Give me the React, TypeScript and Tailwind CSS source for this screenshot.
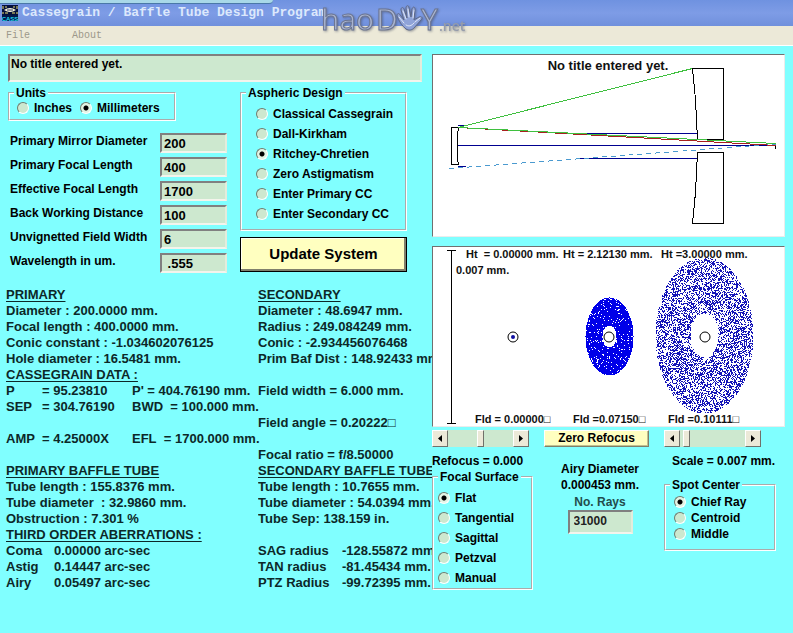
import { useState } from "react";
import type { ReactNode } from "react";

const FIELDS = [
  ["Primary Mirror Diameter", "200"],
  ["Primary Focal Length", "400"],
  ["Effective Focal Length", "1700"],
  ["Back Working Distance", "100"],
  ["Unvignetted Field Width", "6"],
  ["Wavelength in um.", " .555"],
];

const sunken =
  "rounded-none border-2 border-t-[#808080] border-l-[#808080] border-r-[#e4ecdc] border-b-[#f4f4ec] bg-[#cde8cf] outline-none";

function Group({ title, className, children }: { title: string; className?: string; children: ReactNode }) {
  return (
    <fieldset className={`border-2 border-white [border-style:groove] ${className ?? ""}`}>
      <legend className="ml-1 px-[2px] leading-4">{title}</legend>
      {children}
    </fieldset>
  );
}

function Radios({
  name,
  options,
  initial,
  className,
  rowClass,
}: {
  name: string;
  options: string[];
  initial: string;
  className: string;
  rowClass: string;
}) {
  const [value, setValue] = useState(initial);
  return (
    <div className={`flex ${className}`}>
      {options.map((o) => (
        <label key={o} className={`flex items-center gap-[5px] whitespace-nowrap ${rowClass}`}>
          <input
            type="radio"
            name={name}
            checked={value === o}
            onChange={() => setValue(o)}
            className="size-3 shrink-0 appearance-none rounded-full border border-t-[#707c70] border-l-[#707c70] border-r-white border-b-white bg-[#cde8cf] checked:bg-[radial-gradient(circle,#000_2px,#e4f4e4_3px)]"
          />
          {o}
        </label>
      ))}
    </div>
  );
}

function ScrollBar({ label, initial }: { label: string; initial: number }) {
  const [value, setValue] = useState(initial);
  const button =
    "flex w-4 shrink-0 items-center justify-center border border-t-white border-l-white border-r-[#70706a] border-b-[#70706a] bg-[#ece9d8]";
  return (
    <div className="flex h-[17px] w-[97px]">
      <button type="button" aria-label={`Decrease ${label}`} onClick={() => setValue(value - 1)} className={button}>
        <svg viewBox="0 0 4 7" className="h-[7px] w-1">
          <path d="M4 0v7L0 3.5z" />
        </svg>
      </button>
      <input
        type="range"
        aria-label={label}
        min={0}
        max={100}
        value={value}
        onChange={(e) => setValue(Number(e.target.value))}
        className="h-full min-w-0 flex-1 appearance-none bg-[#cde8cf] [&::-webkit-slider-thumb]:h-[17px] [&::-webkit-slider-thumb]:w-[7px] [&::-webkit-slider-thumb]:appearance-none [&::-webkit-slider-thumb]:border [&::-webkit-slider-thumb]:border-t-white [&::-webkit-slider-thumb]:border-r-[#70706a] [&::-webkit-slider-thumb]:border-b-[#70706a] [&::-webkit-slider-thumb]:border-l-white [&::-webkit-slider-thumb]:bg-[#ece9d8]"
      />
      <button type="button" aria-label={`Increase ${label}`} onClick={() => setValue(value + 1)} className={button}>
        <svg viewBox="0 0 4 7" className="h-[7px] w-1">
          <path d="M0 0v7l4-3.5z" />
        </svg>
      </button>
    </div>
  );
}

/* One-pixel ray hits spread over an elliptical ring. */
function rayHits(cx: number, cy: number, rx: number, ry: number, hx: number, hy: number, fill: number, seed: number) {
  let s = seed;
  const random = () => {
    s = (s * 1664525 + 1013904223) % 4294967296;
    return s / 4294967296;
  };
  let d = "";
  for (let y = Math.floor(cy - ry); y <= cy + ry; y++) {
    for (let x = Math.floor(cx - rx); x <= cx + rx; x++) {
      const r = random();
      const outer = ((x - cx) / rx) ** 2 + ((y - cy) / ry) ** 2;
      const inner = ((x - cx) / hx) ** 2 + ((y - cy) / hy) ** 2;
      if (outer <= 1 && inner >= 1 && r < fill) d += `M${x} ${y}h1v1h-1z`;
    }
  }
  return d;
}

const MID_SPOT = rayHits(176, 90, 24, 39, 7, 11, 0.91, 7);
const EDGE_SPOT = rayHits(271, 89, 49, 78, 14, 22, 0.46, 21);

const plotFrame = "border border-t-[#707070] border-l-[#707070] border-r-[#ececec] border-b-[#ececec] bg-white";

function LayoutPlot() {
  return (
    <div className={plotFrame}>
      <svg viewBox="0 1 351 181" className="block w-full" fill="none" stroke="#000" role="img" aria-label="Optical layout">
        <text x="175" y="16" textAnchor="middle" className="fill-[#111] stroke-none text-[13px] font-bold">
          No title entered yet.
        </text>
        <path shapeRendering="crispEdges" d="M259.5 14.5H290.5V85.5H264.5L262.5 45.5ZM264.5 98.5H290.5V169.5H259.5L262.5 138.5ZM18.5 73.5H25.5L24.5 80.5V104.5L25.5 110.5H18.5Z" />
        <path shapeRendering="crispEdges" stroke="#000090" d="M25 91.5H343M143 79.5H264M143 104.5H264M25 71.5H33M25 112.5H33" />
        <path shapeRendering="crispEdges" d="M264.5 79V86M264.5 98V105M342.5 89V95" />
        <path shapeRendering="crispEdges" stroke="#4a9ad0" strokeDasharray="5 4" d="M16 114.5L343 90" />
        <path shapeRendering="crispEdges" stroke="#a82020" d="M25 73.500L343 91.500" />
        <path shapeRendering="crispEdges" stroke="#3fc03f" d="M25 73.500L33 71.500L259.500 14.500M25 73.500L343 89.500" />
      </svg>
    </div>
  );
}

function SpotPlot() {
  return (
    <div className={plotFrame}>
      <svg viewBox="0 1 351 179" className="block w-full" fill="none" stroke="#000" role="img" aria-label="Spot diagrams">
        <path shapeRendering="crispEdges" d="M18.5 4.5V177.5M14 4.5H23M14 177.5H23" />
        <g shapeRendering="crispEdges" stroke="none" fill="#0000e8">
          <path d={MID_SPOT} />
          <path d={EDGE_SPOT} fill="#1414b8" />
        </g>
        <circle cx="80" cy="91" r="2" stroke="none" fill="#1010a0" />
        <circle cx="80" cy="91" r="5" />
        <circle cx="176" cy="91" r="5" />
        <circle cx="272" cy="91" r="5" />
        <g className="fill-[#111] stroke-none text-[11px] font-bold">
          <text x="33" y="12">Ht&nbsp; = 0.00000 mm.</text>
          <text x="130" y="12">Ht = 2.12130 mm.</text>
          <text x="228" y="12">Ht =3.00000 mm.</text>
          <text x="23" y="28">0.007 mm.</text>
          <text x="42" y="177">Fld = 0.00000□</text>
          <text x="140" y="177">Fld =0.07150□</text>
          <text x="235" y="177">Fld =0.10111□</text>
        </g>
      </svg>
    </div>
  );
}

function Heading({ children }: { children: ReactNode }) {
  return <h2 className="underline underline-offset-2">{children}</h2>;
}

function Results() {
  return (
    <section className="grid grid-cols-[252px_minmax(0,1fr)] pl-[6px] text-[13px] leading-4 font-bold whitespace-nowrap text-[#0c2828]">
      <div>
        <Heading>PRIMARY</Heading>
        <p>Diameter : 200.0000 mm.</p>
        <p>Focal length : 400.0000 mm.</p>
        <p>Conic constant : -1.034602076125</p>
        <p>Hole diameter : 16.5481 mm.</p>
        <Heading>CASSEGRAIN DATA :</Heading>
        <div className="grid grid-cols-[36px_90px_1fr]">
          <span>P</span>
          <span>= 95.23810</span>
          <span>P' = 404.76190 mm.</span>
          <span>SEP</span>
          <span>= 304.76190</span>
          <span>BWD&nbsp; = 100.000 mm.</span>
        </div>
        <div className="grid grid-cols-[36px_90px_1fr] py-4">
          <span>AMP</span>
          <span>= 4.25000X</span>
          <span>EFL&nbsp; = 1700.000 mm.</span>
        </div>
        <Heading>PRIMARY BAFFLE TUBE</Heading>
        <p>Tube length : 155.8376 mm.</p>
        <p>Tube diameter&nbsp; : 32.9860 mm.</p>
        <p>Obstruction : 7.301 %</p>
        <Heading>THIRD ORDER ABERRATIONS :</Heading>
        <div className="grid grid-cols-[48px_1fr]">
          <span>Coma</span>
          <span>0.00000 arc-sec</span>
          <span>Astig</span>
          <span>0.14447 arc-sec</span>
          <span>Airy</span>
          <span>0.05497 arc-sec</span>
        </div>
      </div>
      <div className="overflow-hidden">
        <Heading>SECONDARY</Heading>
        <p>Diameter : 48.6947 mm.</p>
        <p>Radius : 249.084249 mm.</p>
        <p>Conic : -2.934456076468</p>
        <p>Prim Baf Dist : 148.92433 mm.</p>
        <div className="flex flex-col gap-4 pt-4">
          <p>Field width = 6.000 mm.</p>
          <p>Field angle = 0.20222□</p>
          <p>Focal ratio = f/8.50000</p>
        </div>
        <Heading>SECONDARY BAFFLE TUBE</Heading>
        <p>Tube length : 10.7655 mm.</p>
        <p>Tube diameter : 54.0394 mm.</p>
        <p>Tube Sep: 138.159 in.</p>
        <div className="grid grid-cols-[84px_1fr] pt-4">
          <span>SAG radius</span>
          <span>-128.55872 mm.</span>
          <span>TAN radius</span>
          <span>-81.45434 mm.</span>
          <span>PTZ Radius</span>
          <span>-99.72395 mm.</span>
        </div>
      </div>
    </section>
  );
}

function AppIcon() {
  return (
    <svg viewBox="0 0 16 16" className="size-4 shrink-0 overflow-visible">
      <rect width="16" height="16" fill="#04103c" />
      <path d="M1 1v3M15 1v3M1 7v2M15 7v2M3 2h2M11 2h2M3 8h3M10 8h3" stroke="#e8e070" />
      <path d="M2 5Q8 1 14 5Q8 9 2 5Z" fill="#f8f8d8" />
      <path d="M5 5h6" stroke="#303060" />
      <rect y="10" width="16" height="6" fill="#001848" />
      <text x="8" y="16" textAnchor="middle" className="fill-[#20d8f0] text-[6px] font-bold">
        CASS
      </text>
    </svg>
  );
}

function Watermark() {
  return (
    <svg
      viewBox="0 0 160 46"
      className="pointer-events-none absolute top-0 left-[320px] h-[46px] w-[160px] overflow-visible fill-[#a9b4d0] stroke-[#6c7590] font-['Open_Sans',sans-serif] drop-shadow-[1px_1px_1px_#40486080]"
    >
      <text x="1" y="30" className="text-[30px]">hao</text>
      <text x="56" y="30" className="text-[30px]">D</text>
      <text x="101" y="30" className="text-[30px]">Y</text>
      <text x="119" y="31" className="fill-[#959cab] stroke-none text-[14px] font-semibold">.net</text>
      <g fill="none" strokeWidth="1" strokeLinecap="round" strokeLinejoin="round">
        <path
          stroke="#5d6888"
          fill="#8fa3d8"
          d="M86 29C82 26 79 21 77 16C77 13 79 13 80 15L84 20L81 10C81 7 83 7 84 9L87 18L86 8C86 5 89 5 89 8L91 17L92 9C93 6 95 7 95 9L94 20L99 17C102 16 103 18 101 20L94 28C92 30 89 31 86 29Z"
        />
        <path stroke="#dfe6f6" d="M79 17L84 23M83 11L86 19M88 9L89 17M94 10L93 18M100 18L95 22M86 25Q90 28 94 23" />
      </g>
    </svg>
  );
}

export default function App() {
  const [title, setTitle] = useState("No title entered yet.");
  return (
    <div className="min-h-screen bg-[#80ffff] font-['Liberation_Sans',Arial,sans-serif] text-black">
      <header className="relative">
        <div className="h-[26px] bg-linear-to-b from-[#6f92e0] via-[#7e9ce6] to-[#7090dc]">
          <div className="h-1 w-[273px] rounded-br-sm border-b border-[#4a78a8] bg-[#a8d8e8]" />
          <div className="flex items-center gap-1 pl-[2px]">
            <AppIcon />
            <h1 className="font-['Liberation_Mono',monospace] text-[13px] leading-[18px] font-bold whitespace-nowrap text-[#dce8fc]">
              Cassegrain / Baffle Tube Design Program
            </h1>
          </div>
        </div>
        <nav className="flex h-5 items-center gap-[42px] border-b border-white bg-[#ece9d8] pl-[6px] font-['Liberation_Mono',monospace] text-[10px] text-[#9c988a]">
          <button type="button">File</button>
          <button type="button">About</button>
        </nav>
        <Watermark />
      </header>

      <main className="grid grid-cols-[432px_minmax(0,1fr)] pt-2 text-[12px] font-bold">
        <div>
          <div className="pr-[10px] pl-2">
            <input
              aria-label="Title"
              value={title}
              onChange={(e) => setTitle(e.target.value)}
              className={`block h-7 w-full px-px pb-2 ${sunken}`}
            />
          </div>
          <div className="mt-[3px] grid grid-cols-[232px_167px] pl-2">
            <div>
              <Group title="Units" className="w-[168px] pb-1">
                <Radios
                  name="units"
                  options={["Inches", "Millimeters"]}
                  initial="Millimeters"
                  className="gap-2 pl-[7px]"
                  rowClass="h-[14px]"
                />
              </Group>
              <div className="mt-[10px] flex flex-col">
                {FIELDS.map(([label, value]) => (
                  <label key={label} className="flex h-6 justify-between pt-[1px] pr-[13px] pl-[2px] whitespace-nowrap">
                    {label}
                    <input defaultValue={value} className={`mt-[1px] h-5 w-[67px] px-[2px] text-[13px] ${sunken}`} />
                  </label>
                ))}
              </div>
            </div>
            <div>
              <Group title="Aspheric Design" className="pb-[5px]">
                <Radios
                  name="aspheric"
                  options={[
                    "Classical Cassegrain",
                    "Dall-Kirkham",
                    "Ritchey-Chretien",
                    "Zero Astigmatism",
                    "Enter Primary CC",
                    "Enter Secondary CC",
                  ]}
                  initial="Ritchey-Chretien"
                  className="flex-col pt-[3px] pl-[14px]"
                  rowClass="h-5"
                />
              </Group>
              <button
                type="button"
                className="mt-[6px] h-[35px] w-full border border-black bg-[#ffffc0] text-[15px] shadow-[inset_-2px_-2px_0_#80806c,inset_1px_1px_0_#fffff4]"
              >
                Update System
              </button>
            </div>
          </div>
          <div className="mt-3">
            <Results />
          </div>
        </div>

        <div className="pr-2">
          <LayoutPlot />
          <div className="mt-[9px]">
            <SpotPlot />
          </div>
          <div className="mt-[3px] grid grid-cols-[112px_120px_minmax(0,1fr)]">
            <div>
              <ScrollBar label="Refocus" initial={50} />
              <p className="mt-[6px] leading-4">Refocus = 0.000</p>
              <Group title="Focal Surface" className="w-[101px]">
                <Radios
                  name="focal-surface"
                  options={["Flat", "Tangential", "Sagittal", "Petzval", "Manual"]}
                  initial="Flat"
                  className="flex-col pt-[3px] pl-1"
                  rowClass="h-5"
                />
              </Group>
            </div>
            <div className="leading-4">
              <button
                type="button"
                className="block h-[17px] w-[105px] border border-t-white border-l-white border-r-[#808068] border-b-[#808068] bg-[#ffffc0] leading-[15px] shadow-[inset_-1px_-1px_0_#c0c090]"
              >
                Zero Refocus
              </button>
              <div className="mt-[14px] flex w-28 flex-col items-center">
                <p>Airy Diameter</p>
                <p>0.000453 mm.</p>
                <label className="flex flex-col items-center pt-[1px] text-[#234c4c]">
                  No. Rays
                  <input defaultValue="31000" className={`h-6 w-[65px] px-1 pb-[2px] text-[#222] ${sunken}`} />
                </label>
              </div>
            </div>
            <div>
              <ScrollBar label="Scale" initial={6} />
              <p className="mt-[6px] pl-2 leading-4">Scale = 0.007 mm.</p>
              <Group title="Spot Center" className="mt-2 w-[112px] pb-[7px]">
                <Radios
                  name="spot-center"
                  options={["Chief Ray", "Centroid", "Middle"]}
                  initial="Chief Ray"
                  className="flex-col pt-[1px] pl-2"
                  rowClass="h-4"
                />
              </Group>
            </div>
          </div>
        </div>
      </main>
    </div>
  );
}
